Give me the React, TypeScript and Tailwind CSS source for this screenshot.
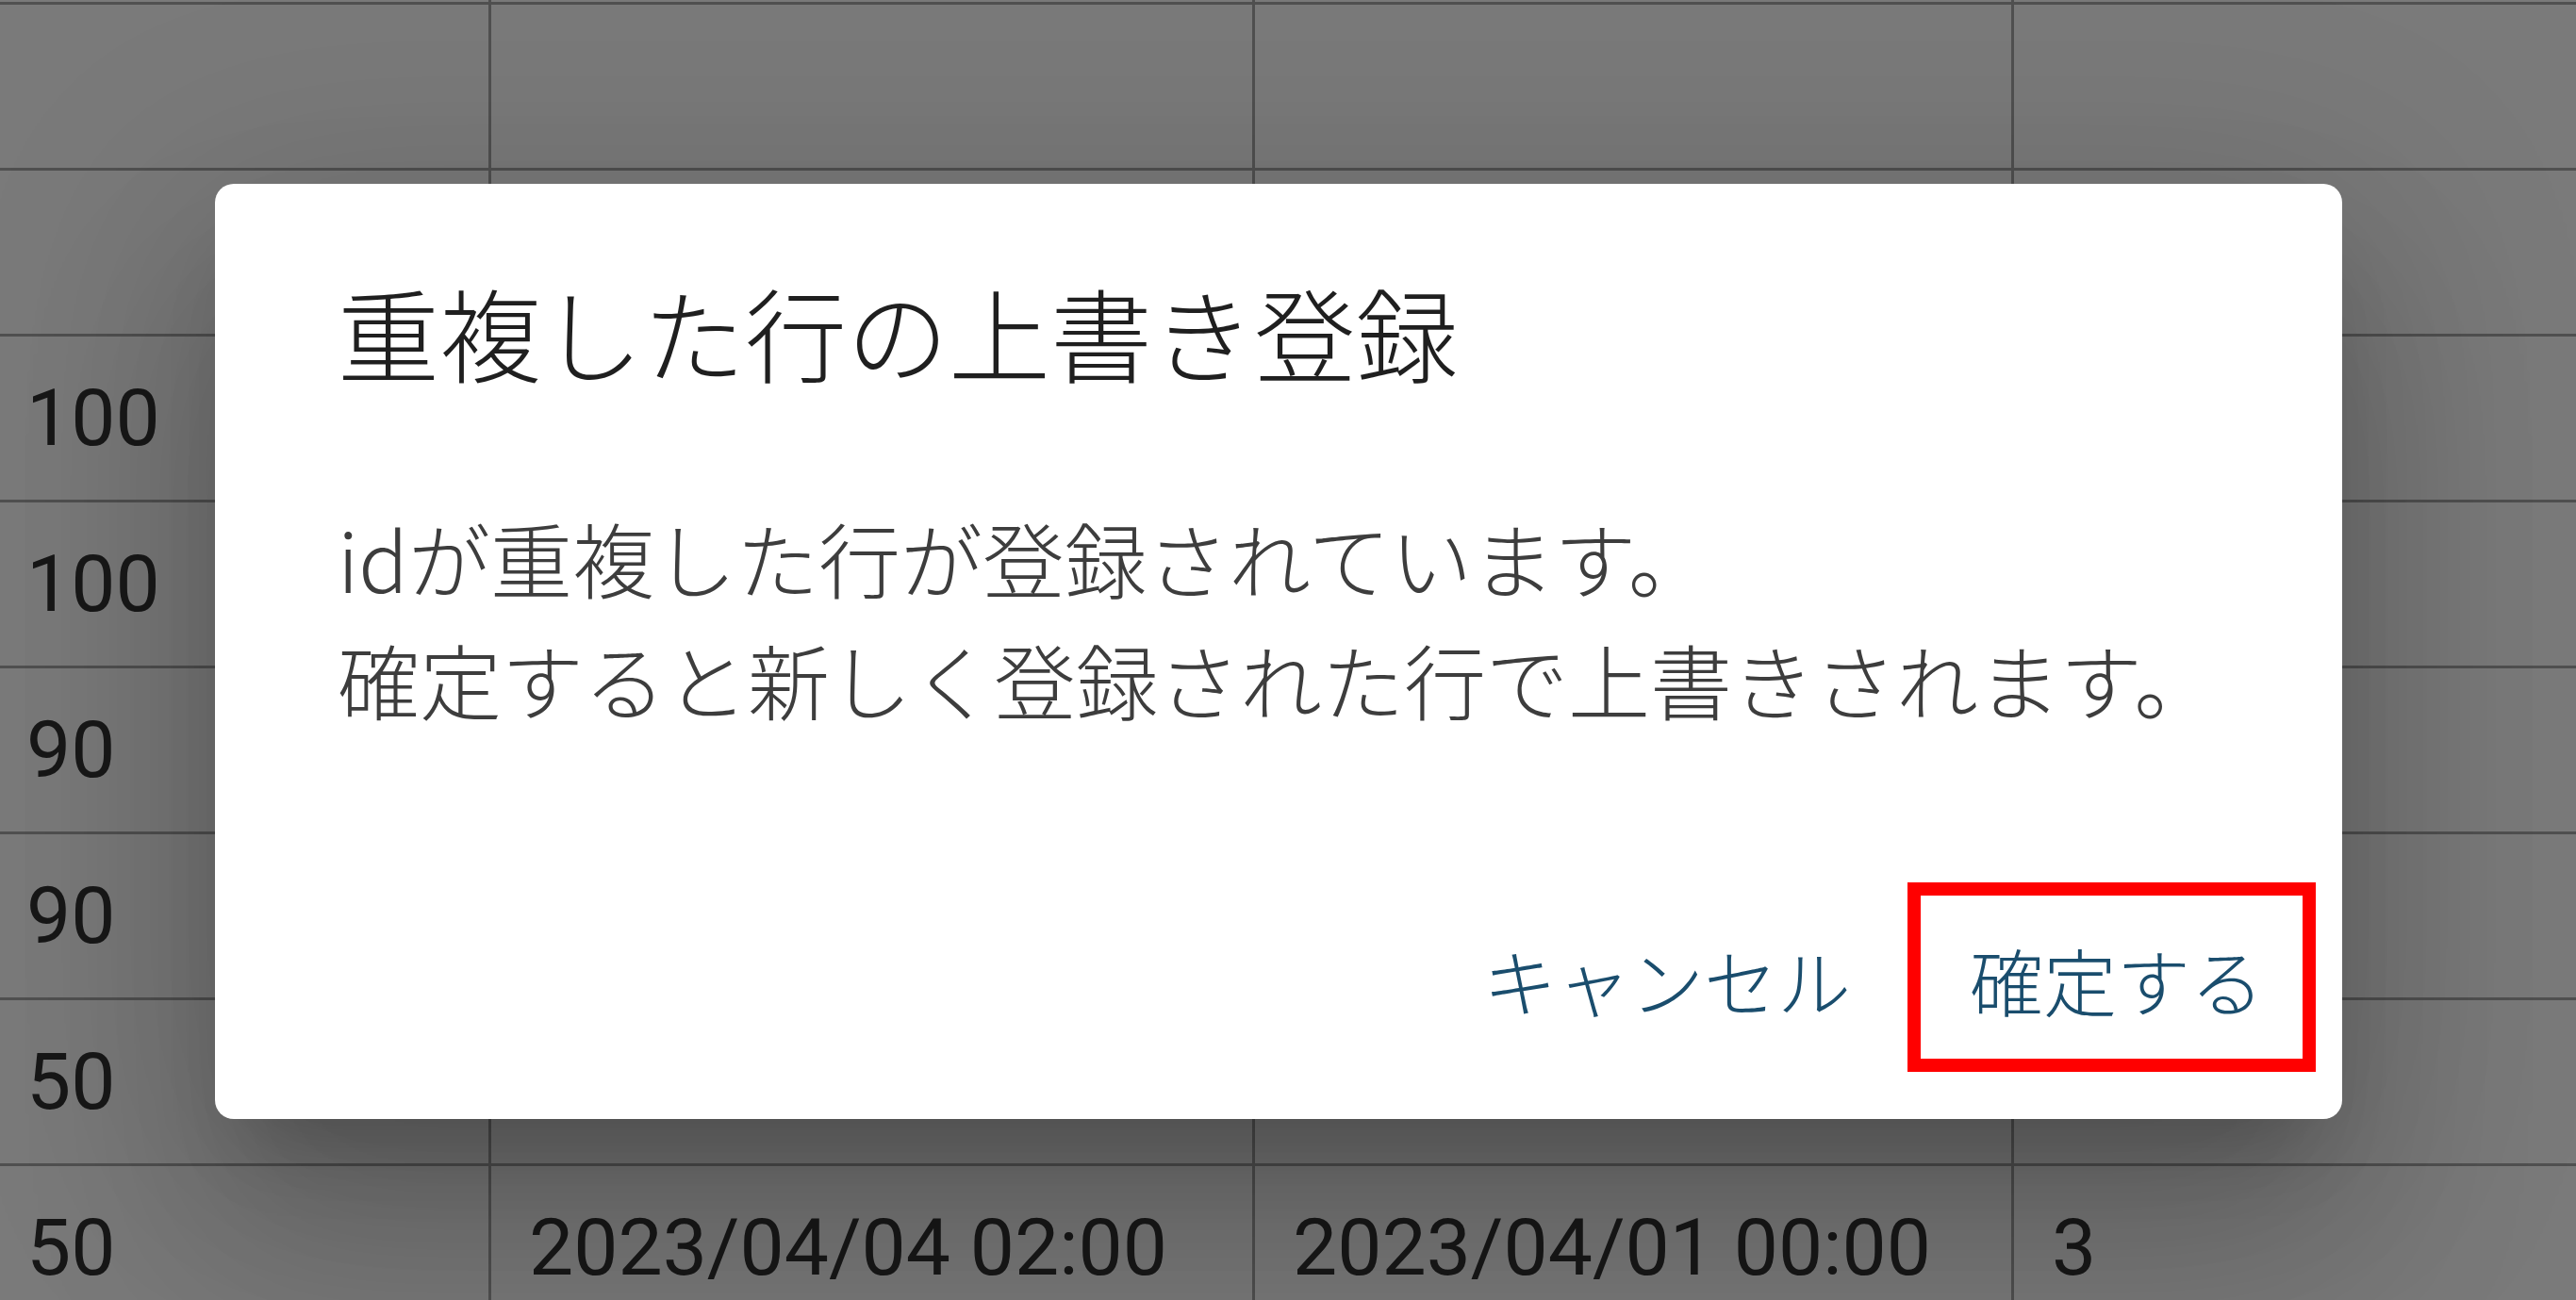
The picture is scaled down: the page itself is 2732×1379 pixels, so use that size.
import React from "react";

const rows: string[][] = [
  ["", "", "", ""],
  ["", "", "", ""],
  ["", "", "", ""],
  ["100", "", "", ""],
  ["100", "", "", ""],
  ["90", "", "", ""],
  ["90", "", "", ""],
  ["50", "", "", ""],
  ["50", "2023/04/04 02:00", "2023/04/01 00:00", "3"],
];

export default function App() {
  return (
    <div className="relative w-[2732px] h-[1379px] overflow-hidden bg-white">
      {/* table */}
      <div
        className="-mt-[171px] text-[84px] text-[#333333]"
        style={{ fontFamily: 'Roboto, "Liberation Sans", Arial, sans-serif' }}
      >
        {rows.map((r, i) => (
          <div
            key={i}
            className="grid grid-cols-[521px_810px_805px_1fr] h-[176px] border-b-[3px] border-[#a8a8a8]"
          >
            {r.map((c, j) => (
              <div
                key={j}
                className={
                  j === 0
                    ? "flex items-center pl-[28px] border-r-[3px] border-[#a8a8a8]"
                    : j === 3
                    ? "flex items-center pl-[40px]"
                    : "flex items-center pl-[40px] border-r-[3px] border-[#a8a8a8]"
                }
              >
                {c}
              </div>
            ))}
          </div>
        ))}
      </div>

      {/* overlay */}
      <div className="absolute inset-0 bg-black/[0.52]" />

      {/* dialog */}
      <div className="absolute inset-0 flex items-start justify-start pl-[228px] pt-[195px]">
        <div
          className="w-[2256px] h-[992px] bg-white rounded-[20px] flex flex-col shadow-[0_59px_81px_-38px_rgba(0,0,0,0.2),0_130px_205px_16px_rgba(0,0,0,0.14),0_49px_248px_43px_rgba(0,0,0,0.12)]"
          style={{ fontFamily: '"Noto Sans CJK JP", "Noto Sans", sans-serif' }}
        >
          <h2 className="pt-[70px] px-[130px] text-[108px] leading-[173px] font-light text-[#1f1f1f]">
            重複した行の上書き登録
          </h2>
          <div className="pt-[89px] px-[130px] text-[87px] leading-[129px] font-light text-[#3d3d3d]">
            <p>idが重複した行が登録されています。</p>
            <p>確定すると新しく登録された行で上書きされます。</p>
          </div>
          <div className="mt-auto flex justify-end gap-[40px] pr-[40px] pb-[49px]">
            <button className="h-[197px] px-[43px] flex items-center text-[78px] font-light text-[#1a4d6d]">
              キャンセル
            </button>
            <button className="relative h-[197px] px-[43px] flex items-center text-[78px] font-light text-[#1a4d6d]">
              確定する
              <span className="absolute -left-[23px] -right-[12px] -top-[5px] bottom-[1px] border-[14px] border-[#ff0000]" />
            </button>
          </div>
        </div>
      </div>
    </div>
  );
}
